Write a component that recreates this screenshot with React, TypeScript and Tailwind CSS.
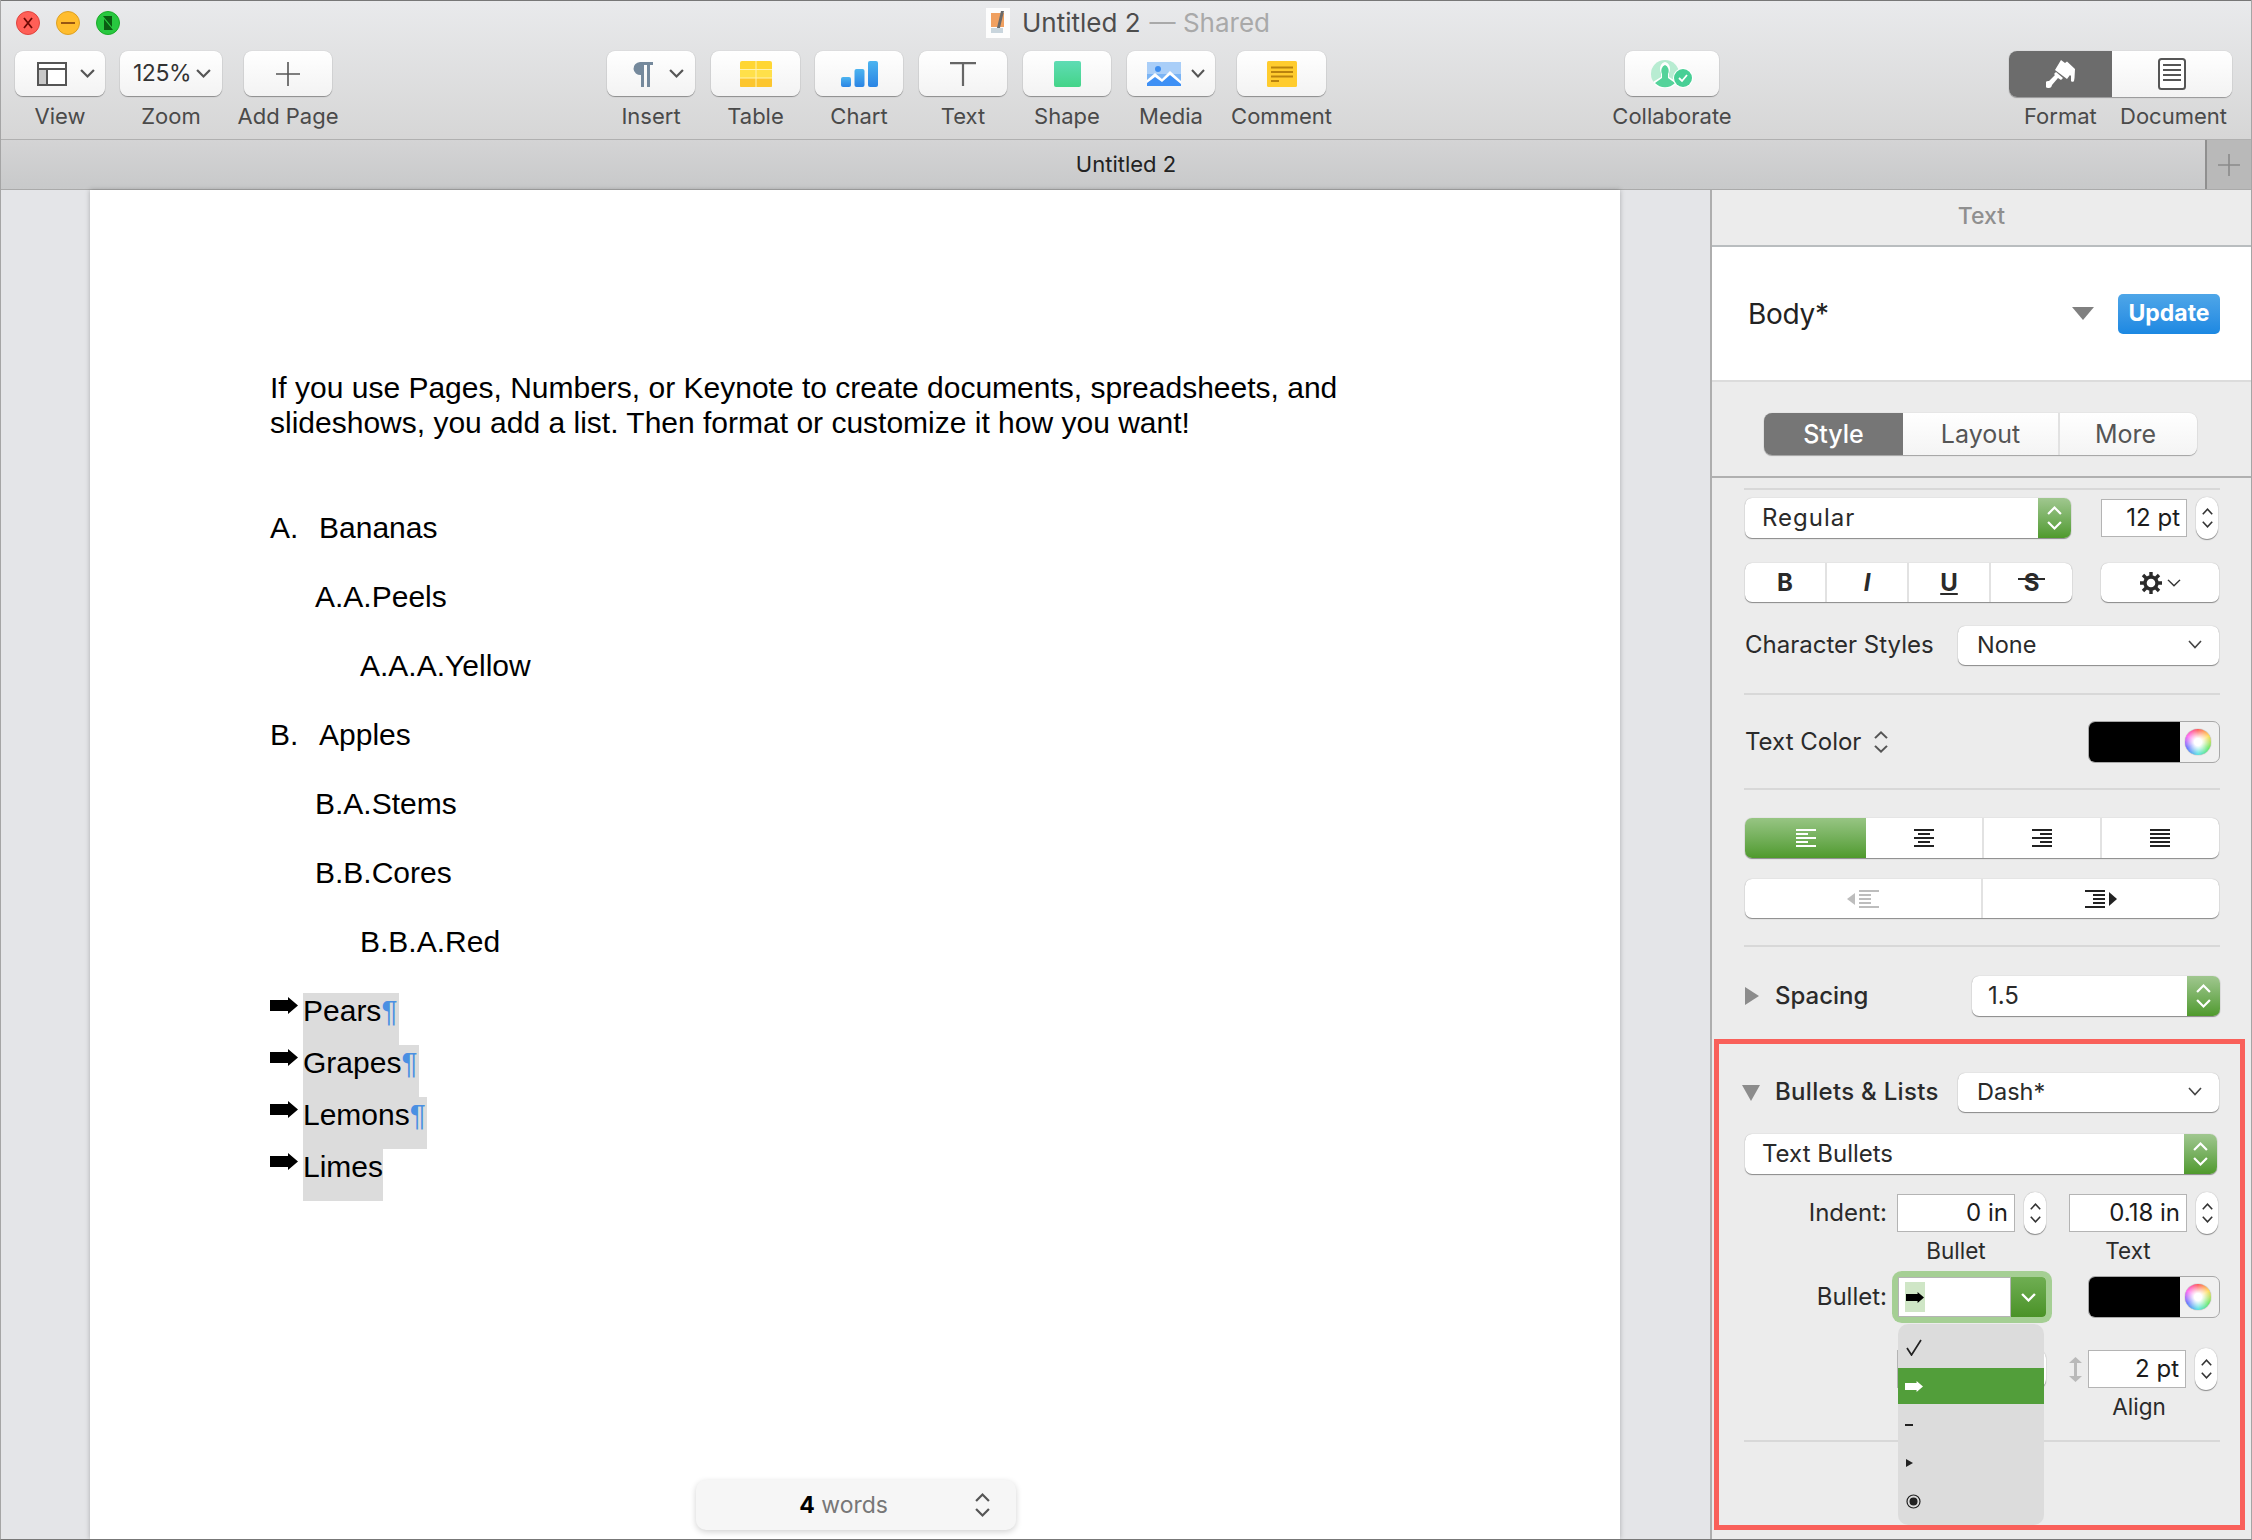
import React from "react";

const Chev = ({ className = "", up = false, w = 14, h = 9, sw = 2, color = "#555" }: { className?: string; up?: boolean; w?: number; h?: number; sw?: number; color?: string }) => (
  <svg width={w} height={h} viewBox="0 0 14 9" className={className} preserveAspectRatio="none">
    <polyline points={up ? "1,8 7,1.5 13,8" : "1,1 7,7.5 13,1"} fill="none" stroke={color} strokeWidth={sw} />
  </svg>
);

const UpDown = ({ color = "#444", w = 13, h = 8, gap = "gap-[5px]" }: { color?: string; w?: number; h?: number; gap?: string }) => (
  <div className={`flex flex-col items-center ${gap}`}>
    <Chev up color={color} w={w} h={h} />
    <Chev color={color} w={w} h={h} />
  </div>
);

const Arrow = ({ color = "#000", w = 28, h = 17 }: { color?: string; w?: number; h?: number }) => (
  <svg width={w} height={h} viewBox="0 0 28 17">
    <path d="M0 3 H18 V0 L28 8.5 L18 17 V14 H0 Z" fill={color} />
  </svg>
);

const Tool = ({ label, width, ml, children, labelClass = "" }: { label: string; width: string; ml: string; children?: React.ReactNode; labelClass?: string }) => (
  <div className={`flex flex-col items-center ${width} ${ml}`}>
    <div className="flex h-[45px] w-full items-center justify-center rounded-[8px] bg-gradient-to-b from-white to-[#f3f3f3] shadow-[0_1px_1px_rgba(0,0,0,0.35),0_0_1px_rgba(0,0,0,0.25)]">
      {children}
    </div>
    <div className={`mt-[7px] whitespace-nowrap text-[22px] leading-[26px] text-[#4a4a4a] ${labelClass}`}>{label}</div>
  </div>
);

const GreenSelect = ({ width, green, text, tall = "h-[40px]", pl = "pl-[17px]", tracking = "" }: { width: string; green: string; text: string; tall?: string; pl?: string; tracking?: string }) => (
  <div className={`flex ${tall} ${width} rounded-[7px] bg-white shadow-[0_1px_1px_rgba(0,0,0,0.4),0_0_1px_rgba(0,0,0,0.3)]`}>
    <div className={`flex flex-1 items-center ${pl} text-[24px] text-[#2a2a2a] ${tracking}`}>{text}</div>
    <div className={`flex ${green} items-center justify-center rounded-r-[7px] bg-gradient-to-b from-[#a0c78f] to-[#4f9a2b]`}>
      <UpDown color="#fff" w={15} h={9} gap="gap-[6px]" />
    </div>
  </div>
);

const Select = ({ text, ml = "" }: { text: string; ml?: string }) => (
  <div className={`flex h-[39px] w-[261px] items-center justify-between rounded-[7px] bg-white pb-[2px] pl-[19px] pr-[17px] text-[23.5px] text-[#2a2a2a] shadow-[0_1px_1px_rgba(0,0,0,0.4),0_0_1px_rgba(0,0,0,0.3)] ${ml}`}>
    <span>{text}</span>
    <Chev w={14} h={9} sw={1.6} color="#444" />
  </div>
);

const Stepper = ({ ml = "ml-[9px]", w = "w-[22px]", h = "h-[42px]" }: { ml?: string; w?: string; h?: string }) => (
  <div className={`flex ${h} ${w} ${ml} shrink-0 items-center justify-center rounded-[11px] bg-white shadow-[0_1px_1px_rgba(0,0,0,0.4),0_0_1px_rgba(0,0,0,0.3)]`}>
    <UpDown color="#333" w={11} h={7} gap="gap-[6px]" />
  </div>
);

const Num = ({ text, width, h = "h-[38px]" }: { text: string; width: string; h?: string }) => (
  <div className={`flex ${h} ${width} shrink-0 items-center justify-end border border-[#b4b4b4] bg-white pr-[6px] text-[24px] text-[#1c1c1c]`}>{text}</div>
);

const Swatch = () => (
  <div className="flex h-[42px] w-[132px] overflow-hidden rounded-[7px] border border-[#a8a8a8] bg-[#f0f0f0]">
    <div className="w-[91px] bg-black" />
    <div className="flex flex-1 items-center justify-center pr-[4px]">
      <div className="h-[26px] w-[26px] rounded-full bg-[radial-gradient(circle,#ffffff_20%,transparent_72%),conic-gradient(#ff4d4d,#ffd84d,#5ee65e,#4de0e0,#5a6bff,#ff5af0,#ff4d4d)] shadow-[0_0_1px_rgba(0,0,0,0.6)]" />
    </div>
  </div>
);

const Line = ({ mt }: { mt: string }) => <div className={`h-[2px] w-[476px] -ml-px bg-[#d8d8d8] ${mt}`} />;

const AlignIcon = ({ mode, color }: { mode: "l" | "c" | "r" | "j"; color: string }) => {
  const rows = [20, 12, 20, 12, 20];
  return (
    <svg width="20" height="18" viewBox="0 0 20 18">
      {rows.map((r, i) => {
        const w = mode === "j" ? 20 : r;
        const x = mode === "l" || mode === "j" ? 0 : mode === "c" ? (20 - w) / 2 : 20 - w;
        return <rect key={i} x={x} y={i * 4} width={w} height="2" fill={color} />;
      })}
    </svg>
  );
};

const IndentIcon = ({ out, color }: { out: boolean; color: string }) => (
  <svg width="32" height="18" viewBox="0 0 32 18">
    {out ? (
      <>
        <path d="M0 9 L8 3 V15 Z" fill={color} />
        {[20, 12, 12, 12, 20].map((w, i) => (
          <rect key={i} x="12" y={i * 4} width={w} height="2" fill={color} />
        ))}
      </>
    ) : (
      <>
        {[20, 12, 12, 12, 20].map((w, i) => (
          <rect key={i} x={20 - w} y={i * 4} width={w} height="2" fill={color} />
        ))}
        <path d="M24 2 L32 9 L24 16 Z" fill={color} />
      </>
    )}
  </svg>
);

const listRow = "flex h-[69px] items-center text-[30px] text-black";
const hlRow = "flex h-[52px] items-start";

const Bullet = ({ text, pil = true, width }: { text: string; pil?: boolean; width: string }) => (
  <div className={hlRow}>
    <div className="mt-[4px] w-[33px] shrink-0">
      <Arrow />
    </div>
    <div className={`flex h-[52px] ${width} items-center bg-[#dcdcdc] pb-[18px] text-[30px] text-black`}>
      <span>{text}</span>
      {pil && <span className="text-[#4a90e2]">¶</span>}
    </div>
  </div>
);

export default function App() {
  return (
    <div className="relative flex h-[1540px] w-[2252px] flex-col overflow-hidden border-x border-b border-x-[#a5a5a5] border-b-[#777] bg-white font-['Inter',sans-serif]">
      {/* toolbar */}
      <div className="h-[140px] shrink-0 border-t border-b border-t-[#777] border-b-[#b0b0b0] bg-gradient-to-b from-[#e9eaec] to-[#d6d6d6]">
        <div className="relative flex h-[50px] items-center pl-[15px]">
          <div className="mb-[6px] flex items-center">
            <div className="relative h-[24px] w-[24px] rounded-full border border-[#e0443e] bg-[#ff5f57]">
              <svg viewBox="0 0 22 22" className="h-full w-full">
                <path d="M7 6 L15 16 M15 6 L7 16" stroke="#6e0a06" strokeWidth="1.8" />
              </svg>
            </div>
            <div className="ml-[16px] h-[24px] w-[24px] rounded-full border border-[#dea123] bg-[#ffbd2e]">
              <svg viewBox="0 0 22 22" className="h-full w-full">
                <path d="M4 11 H18" stroke="#985712" strokeWidth="2" />
              </svg>
            </div>
            <div className="ml-[16px] h-[24px] w-[24px] rounded-full border border-[#1aab29] bg-[#28c840]">
              <svg viewBox="0 0 22 22" className="h-full w-full">
                <path d="M6 4 H15 V15 Z M7 7 L16 18 H7 Z" fill="#0a5c12" />
              </svg>
            </div>
          </div>
          <div className="mb-[6px] ml-[866px] flex items-center">
            <svg width="24" height="30" viewBox="0 0 24 30">
              <rect width="24" height="30" fill="#fdfdfd" />
              <rect x="5" y="5" width="13" height="14" fill="#f0a060" />
              <path d="M15 3 L18 3 L13 24 L10 24 Z" fill="#6a6a6a" />
              <rect x="5" y="20" width="12" height="5" fill="#c9d5dd" />
            </svg>
            <span className="ml-[12px] whitespace-nowrap text-[26px] leading-[30px] text-[#4d4d4d]">Untitled 2</span>
            <span className="ml-[9px] whitespace-nowrap text-[26px] leading-[30px] text-[#a9a9a9]">— Shared</span>
          </div>
        </div>
        <div className="flex pl-[14px]">
          <Tool label="View" width="w-[90px]" ml="">
            <svg width="30" height="24" viewBox="0 0 30 24" className="ml-[12px]">
              <rect x="1" y="1" width="28" height="22" fill="#fff" stroke="#555" strokeWidth="2" />
              <rect x="2" y="8" width="8" height="14" fill="#c8c8c8" />
              <path d="M1 7 H29 M10 7 V23" stroke="#555" strokeWidth="2" fill="none" />
            </svg>
            <Chev className="ml-[13px]" w={15} h={9} />
          </Tool>
          <Tool label="Zoom" width="w-[102px]" ml="ml-[15px]">
            <span className="ml-[2px] text-[23px] tracking-[-0.5px] text-[#333]">125%</span>
            <Chev className="ml-[5px]" w={15} h={9} />
          </Tool>
          <Tool label="Add Page" width="w-[88px]" ml="ml-[22px]">
            <svg width="24" height="24" viewBox="0 0 24 24">
              <path d="M12 0 V24 M0 12 H24" stroke="#555" strokeWidth="1.6" />
            </svg>
          </Tool>
          <Tool label="Insert" width="w-[88px]" ml="ml-[275px]">
            <svg width="22" height="26" viewBox="0 0 22 26" className="ml-[13px] mr-[16px]">
              <path d="M9 1 H22 V4 H19 V26 H16 V4 H13 V26 H10 V14 A7 6.5 0 0 1 9 1 Z" fill="#75899c" />
            </svg>
            <Chev w={15} h={9} />
          </Tool>
          <Tool label="Table" width="w-[89px]" ml="ml-[16px]">
            <svg width="32" height="26" viewBox="0 0 32 26">
              <rect width="32" height="26" rx="2" fill="#ffd633" />
              <rect y="9" width="32" height="8" fill="#ffe04a" />
              <rect y="17" width="32" height="9" rx="1" fill="#fcc62e" />
              <path d="M0 8.5 H32 M0 17 H32 M16 0 V26" stroke="#fff2b0" strokeWidth="1" />
            </svg>
          </Tool>
          <Tool label="Chart" width="w-[88px]" ml="ml-[15px]">
            <svg width="37" height="26" viewBox="0 0 37 26">
              <defs>
                <linearGradient id="bar" x1="0" y1="0" x2="0" y2="1">
                  <stop offset="0" stopColor="#4cb4f0" />
                  <stop offset="1" stopColor="#2a84e4" />
                </linearGradient>
              </defs>
              <rect x="0" y="16" width="10" height="10" rx="2" fill="url(#bar)" />
              <rect x="13.5" y="8" width="10" height="18" rx="2" fill="url(#bar)" />
              <rect x="27" y="0" width="10" height="26" rx="2" fill="url(#bar)" />
            </svg>
          </Tool>
          <Tool label="Text" width="w-[88px]" ml="ml-[16px]">
            <svg width="26" height="24" viewBox="0 0 26 24">
              <path d="M0 1.2 H26 M13 1.2 V24" stroke="#666" strokeWidth="2.2" fill="none" />
            </svg>
          </Tool>
          <Tool label="Shape" width="w-[88px]" ml="ml-[16px]">
            <div className="h-[26px] w-[27px] rounded-[2px] bg-gradient-to-b from-[#5fdcb4] to-[#43d488]" />
          </Tool>
          <Tool label="Media" width="w-[88px]" ml="ml-[16px]">
            <svg width="34" height="24" viewBox="0 0 34 24" className="ml-[10px] mr-[10px]">
              <rect width="34" height="24" fill="#a9cef8" />
              <rect y="12" width="34" height="12" fill="#7ab4f5" />
              <circle cx="11" cy="7" r="3" fill="#3e8ef0" />
              <path d="M0 24 V18 L8 11 L15 17 L23 9 L34 19 V24 Z" fill="#fff" />
              <path d="M0 24 V21 L8 15 L15 20 L23 13 L34 22 V24 Z" fill="#3e90f5" />
            </svg>
            <Chev w={14} h={9} />
          </Tool>
          <Tool label="Comment" width="w-[89px]" ml="ml-[22px]">
            <svg width="30" height="26" viewBox="0 0 30 26">
              <rect width="30" height="26" rx="1.5" fill="#ffcc2e" />
              <path d="M4 6.5 H26 M4 11 H26 M4 15.5 H26 M4 20 H12" stroke="#b9830e" strokeWidth="2" />
            </svg>
          </Tool>
          <Tool label="Collaborate" width="w-[94px]" ml="ml-[299px]">
            <svg width="42" height="28" viewBox="0 0 42 28">
              <circle cx="14" cy="14" r="14" fill="#b8ecd2" />
              <path d="M14 2 A5.5 7 0 0 1 18 13 L18 17 L26 22 A14 14 0 0 1 2 22 L10 17 L10 13 A5.5 7 0 0 1 14 2 Z" fill="#fff" />
              <path d="M14 5 A4.5 6 0 0 1 17 14 L17 18 L24 23 A14 14 0 0 1 4 23 L11 18 L11 14 A4.5 6 0 0 1 14 5 Z" fill="#54d39a" />
              <circle cx="32" cy="18" r="10" fill="#fff" />
              <circle cx="32" cy="18" r="9" fill="#47cf95" />
              <path d="M28 18 L31 21 L36 15" stroke="#fff" strokeWidth="1.8" fill="none" />
            </svg>
          </Tool>
          <div className="ml-[290px] flex w-[223px] flex-col">
            <div className="flex h-[46px] rounded-[8px] bg-white shadow-[0_1px_1px_rgba(0,0,0,0.3),0_0_1px_rgba(0,0,0,0.25)]">
              <div className="flex w-[103px] items-center justify-center rounded-l-[8px] bg-[#6c6c6c]">
                <svg width="30" height="28" viewBox="0 0 30 28">
                  <path d="M15 0 L19 3 L21 1.5 L29 9 L28.5 18 L28 21 A2 2 0 0 1 25 21 L25 16 L24 15 L21 19 L9 10 Z" fill="#fff" />
                  <path d="M10 12 L17 18 L15 20 L12 18 L6 25 A3.5 3.5 0 1 1 3 21 L9 15 L8 14 Z" fill="#fff" />
                </svg>
              </div>
              <div className="flex flex-1 items-center justify-center rounded-r-[8px] bg-gradient-to-b from-white to-[#f3f3f3]">
                <svg width="28" height="32" viewBox="0 0 28 32">
                  <rect x="1" y="1" width="26" height="30" rx="2.5" fill="#fff" stroke="#555" strokeWidth="2" />
                  <path d="M5 7 H23 M5 12 H23 M5 17 H23 M5 22 H23" stroke="#555" strokeWidth="2" />
                </svg>
              </div>
            </div>
            <div className="mt-[6px] flex justify-between pl-[15px] pr-[5px] text-[22px] leading-[26px] text-[#4a4a4a]">
              <span>Format</span>
              <span>Document</span>
            </div>
          </div>
        </div>
      </div>
      {/* tab bar */}
      <div className="flex h-[50px] shrink-0 border-b border-[#aaa] bg-gradient-to-b from-[#d4d4d5] to-[#c8c9ca]">
        <div className="flex flex-1 items-center justify-center pl-[46px] text-[22px] text-[#222]">Untitled 2</div>
        <div className="flex w-[46px] items-center justify-center border-l-2 border-[#8f8f8f] bg-[#b9b9b9]">
          <svg width="22" height="22" viewBox="0 0 22 22">
            <path d="M11 0 V22 M0 11 H22" stroke="#8a8a8a" strokeWidth="1.6" />
          </svg>
        </div>
      </div>
      {/* main */}
      <div className="relative flex min-h-0 flex-1">
        <div className="relative min-w-0 flex-1 bg-[#e4e5e8]">
          <div className="ml-[89px] h-full w-[1530px] bg-white pl-[180px] pt-[181px] font-['Liberation_Sans',Arial,sans-serif] shadow-[0_0_5px_rgba(0,0,0,0.25)]">
            <p className="text-[30px] leading-[34.5px] text-black">
              If you use Pages, Numbers, or Keynote to create documents, spreadsheets, and
              <br />
              slideshows, you add a list. Then format or customize it how you want!
            </p>
            <div className="mt-[53px]">
              <div className={listRow}>
                <span className="w-[49px]">A.</span>
                <span>Bananas</span>
              </div>
              <div className={`${listRow} pl-[45px]`}>A.A.Peels</div>
              <div className={`${listRow} pl-[90px]`}>A.A.A.Yellow</div>
              <div className={listRow}>
                <span className="w-[49px]">B.</span>
                <span>Apples</span>
              </div>
              <div className={`${listRow} pl-[45px]`}>B.A.Stems</div>
              <div className={`${listRow} pl-[45px]`}>B.B.Cores</div>
              <div className={`${listRow} pl-[90px]`}>B.B.A.Red</div>
            </div>
            <div className="mt-[17px]">
              <Bullet text="Pears" width="w-[96px]" />
              <Bullet text="Grapes" width="w-[116px]" />
              <Bullet text="Lemons" width="w-[124px]" />
              <Bullet text="Limes" width="w-[80px]" pil={false} />
            </div>
          </div>
          <div className="absolute bottom-[9px] left-[695px] flex h-[50px] w-[320px] items-center justify-end rounded-[10px] bg-[#f6f6f6] pr-[26px] shadow-[0_2px_6px_rgba(0,0,0,0.18)]">
            <span className="mr-[87px] text-[23px] text-[#777]">
              <b className="font-bold text-black">4</b> words
            </span>
            <UpDown color="#555" w={15} h={9} gap="gap-[6px]" />
          </div>
        </div>
        <div className="relative w-[541px] shrink-0 border-l-2 border-[#aeaeae] bg-[#ececec]">
          <div className="flex h-[57px] items-center justify-center border-b-2 border-[#b9bdbf] pb-[2px] text-[23px] font-medium text-[#8f8f8f]">Text</div>
          <div className="flex h-[135px] items-center border-b-2 border-[#dcdcdc] bg-white pl-[36px] pr-[31px]">
            <span className="flex-1 text-[28px] tracking-[-0.3px] text-[#222]">Body*</span>
            <svg width="22" height="13" viewBox="0 0 22 13" className="mr-[24px]">
              <path d="M0 0 H22 L11 13 Z" fill="#808080" />
            </svg>
            <div className="flex h-[40px] w-[102px] items-center justify-center rounded-[5px] bg-gradient-to-b from-[#4ea6e8] to-[#1b88e2] text-[23px] font-bold text-white">Update</div>
          </div>
          <div className="h-[96px] border-b-2 border-[#b0b0b0] pl-[52px] pt-[31px]">
            <div className="flex h-[42px] w-[433px] rounded-[8px] text-[25px] text-[#555] shadow-[0_1px_1px_rgba(0,0,0,0.3),0_0_1px_rgba(0,0,0,0.25)]">
              <div className="flex w-[139px] items-center justify-center rounded-l-[8px] bg-[#767676] pt-[2px] font-medium text-white">Style</div>
              <div className="flex w-[157px] items-center justify-center border-r-2 border-[#e2e2e2] bg-gradient-to-b from-white to-[#f4f4f4] pt-[2px]">Layout</div>
              <div className="flex flex-1 items-center justify-center rounded-r-[8px] bg-gradient-to-b from-white to-[#f4f4f4] pr-[6px] pt-[2px]">More</div>
            </div>
          </div>
          <div className="pl-[33px]">
            <Line mt="mt-[10px]" />
            <div className="mt-[7px] flex items-center">
              <GreenSelect width="w-[326px]" green="w-[33px]" text="Regular" tracking="tracking-[1px]" />
              <Num text="12 pt" width="w-[86px] ml-[30px]" />
              <Stepper />
            </div>
            <div className="mt-[24px] flex">
              <div className="flex h-[39px] w-[327px] rounded-[7px] bg-white text-[24px] font-bold text-[#2a2a2a] shadow-[0_1px_1px_rgba(0,0,0,0.4),0_0_1px_rgba(0,0,0,0.3)]">
                <div className="flex w-[82px] items-center justify-center border-r-2 border-[#e2e2e2]">B</div>
                <div className="flex w-[82px] items-center justify-center border-r-2 border-[#e2e2e2] italic">I</div>
                <div className="flex w-[82px] items-center justify-center border-r-2 border-[#e2e2e2] underline underline-offset-2">U</div>
                <div className="flex flex-1 items-center justify-center">
                  <span className="relative">
                    S
                    <span className="absolute left-[-6px] right-[-6px] top-[13px] h-[2px] bg-[#2a2a2a]" />
                  </span>
                </div>
              </div>
              <div className="ml-[29px] flex h-[39px] w-[118px] items-center justify-center rounded-[7px] bg-white shadow-[0_1px_1px_rgba(0,0,0,0.4),0_0_1px_rgba(0,0,0,0.3)]">
                <svg width="22" height="22" viewBox="0 0 22 22">
                  <circle cx="11" cy="11" r="6" fill="none" stroke="#2a2a2a" strokeWidth="3.4" />
                  <path d="M11 0 V5 M11 17 V22 M0 11 H5 M17 11 H22 M3 3 L7 7 M15 15 L19 19 M19 3 L15 7 M7 15 L3 19" stroke="#2a2a2a" strokeWidth="3.4" />
                </svg>
                <Chev className="ml-[5px]" w={14} h={8} sw={1.5} color="#333" />
              </div>
            </div>
            <div className="mt-[24px] flex items-center">
              <span className="mb-[2px] w-[213px] text-[24px] text-[#2a2a2a]">Character Styles</span>
              <Select text="None" />
            </div>
            <Line mt="mt-[28px]" />
            <div className="mt-[26px] flex h-[42px] items-center">
              <span className="text-[24px] text-[#2a2a2a]">Text Color</span>
              <div className="ml-[13px]">
                <UpDown color="#555" w={14} h={8} gap="gap-[6px]" />
              </div>
              <div className="ml-auto mr-[31px]">
                <Swatch />
              </div>
            </div>
            <Line mt="mt-[25px]" />
            <div className="mt-[28px] flex h-[40px] w-[474px] rounded-[7px] bg-white shadow-[0_1px_1px_rgba(0,0,0,0.4),0_0_1px_rgba(0,0,0,0.3)]">
              <div className="flex w-[121px] items-center justify-center rounded-l-[7px] bg-gradient-to-b from-[#97c583] to-[#4f9a2b]">
                <AlignIcon mode="l" color="#fff" />
              </div>
              <div className="flex w-[118px] items-center justify-center border-r-2 border-[#e2e2e2]">
                <AlignIcon mode="c" color="#222" />
              </div>
              <div className="flex w-[118px] items-center justify-center border-r-2 border-[#e2e2e2]">
                <AlignIcon mode="r" color="#222" />
              </div>
              <div className="flex flex-1 items-center justify-center pr-[2px]">
                <AlignIcon mode="j" color="#222" />
              </div>
            </div>
            <div className="mt-[21px] flex h-[39px] w-[474px] rounded-[7px] bg-white shadow-[0_1px_1px_rgba(0,0,0,0.4),0_0_1px_rgba(0,0,0,0.3)]">
              <div className="flex w-[238px] items-center justify-center border-r-2 border-[#e2e2e2]">
                <IndentIcon out color="#bdbdbd" />
              </div>
              <div className="flex flex-1 items-center justify-center">
                <IndentIcon out={false} color="#222" />
              </div>
            </div>
            <Line mt="mt-[27px]" />
            <div className="mt-[29px] flex h-[40px] items-center">
              <svg width="14" height="18" viewBox="0 0 14 18">
                <path d="M0 0 L14 9 L0 18 Z" fill="#8c8c8c" />
              </svg>
              <span className="ml-[16px] w-[197px] text-[24px] font-medium text-[#2a2a2a]">Spacing</span>
              <GreenSelect width="w-[248px]" green="w-[33px]" text="1.5" pl="pl-[16px]" />
            </div>
            <div className="mt-[57px] flex items-center">
              <svg width="18" height="16" viewBox="0 0 18 16" className="-ml-[3px]">
                <path d="M0 0 H18 L9 16 Z" fill="#8c8c8c" />
              </svg>
              <span className="mb-[2px] ml-[15px] w-[183px] whitespace-nowrap text-[24px] font-medium tracking-[0.3px] text-[#2a2a2a]">Bullets &amp; Lists</span>
              <Select text="Dash*" />
            </div>
            <div className="mt-[22px]">
              <GreenSelect width="w-[472px]" green="w-[33px]" text="Text Bullets" />
            </div>
            <div className="mt-[18px] flex items-center">
              <span className="w-[142px] text-right text-[24px] text-[#2a2a2a]">Indent:</span>
              <Num text="0 in" width="w-[118px] ml-[10px]" />
              <Stepper />
              <Num text="0.18 in" width="w-[118px] ml-[23px]" />
              <Stepper />
            </div>
            <div className="flex h-[34px] items-center text-[22.5px] text-[#2a2a2a]">
              <span className="ml-[151px] w-[120px] text-center">Bullet</span>
              <span className="ml-[82px] w-[60px] text-center">Text</span>
            </div>
            <div className="mt-[8px] flex h-[42px] items-center">
              <span className="w-[142px] text-right text-[24px] text-[#2a2a2a]">Bullet:</span>
              <div className="ml-[11px] flex h-[40px] w-[148px] rounded-[4px] bg-white shadow-[0_0_0_6px_#a5cf94]">
                <div className="flex flex-1 items-center border border-[#b4b4b4] pl-[6px]">
                  <div className="flex h-[30px] w-[20px] items-center justify-center bg-[#cfe6c6]">
                    <Arrow w={18} h={11} />
                  </div>
                </div>
                <div className="flex w-[35px] items-center justify-center rounded-r-[4px] bg-gradient-to-b from-[#6fae52] to-[#4a9226]">
                  <Chev w={15} h={9} color="#fff" sw={2.2} />
                </div>
              </div>
              <div className="ml-[42px]">
                <Swatch />
              </div>
            </div>
            <div className="mt-[30px] flex items-center">
              <Num text="" width="w-[118px] ml-[152px]" />
              <Stepper />
              <svg width="13" height="25" viewBox="0 0 13 25" className="ml-[23px]">
                <path d="M6.5 0 L13 6 H8 V19 H13 L6.5 25 L0 19 H5 V6 H0 Z" fill="#b9b9b9" />
              </svg>
              <Num text="2 pt" width="w-[98px] ml-[6px]" />
              <Stepper />
            </div>
            <div className="ml-[394px] mt-[4px] w-[0px]">
              <div className="flex h-[26px] w-[0px] justify-center whitespace-nowrap text-[22.5px] leading-[26px] text-[#2a2a2a]">Align</div>
            </div>
            <Line mt="mt-[20px]" />
          </div>
          {/* red annotation frame */}
          <div className="absolute left-[2px] top-[849px] h-[491px] w-[531px] border-[5px] border-[#f9605a]" />
          {/* open bullet menu */}
          <div className="absolute left-[186px] top-[1134px] h-[201px] w-[146px] overflow-hidden rounded-[10px] bg-[#dcdcdc]">
            <div className="flex h-[44px] items-center pl-[8px] pt-[3px]">
              <svg width="16" height="17" viewBox="0 0 16 17">
                <path d="M1 9 L5.5 16 L15 1" fill="none" stroke="#222" strokeWidth="1.7" />
              </svg>
            </div>
            <div className="flex h-[36px] items-center bg-[#529e3a] pl-[7px]">
              <Arrow color="#fff" w={18} h={13} />
            </div>
            <div className="flex h-[42px] items-center pl-[7px]">
              <div className="h-[2px] w-[8px] bg-[#222]" />
            </div>
            <div className="flex h-[34px] items-center pl-[8px]">
              <svg width="7" height="8" viewBox="0 0 7 8">
                <path d="M0 0 L7 4 L0 8 Z" fill="#222" />
              </svg>
            </div>
            <div className="flex h-[42px] items-center pl-[8px]">
              <svg width="15" height="15" viewBox="0 0 15 15">
                <circle cx="7.5" cy="7.5" r="6.5" fill="none" stroke="#222" strokeWidth="1.2" />
                <circle cx="7.5" cy="7.5" r="4" fill="#222" />
              </svg>
            </div>
          </div>
        </div>
      </div>
    </div>
  );
}
